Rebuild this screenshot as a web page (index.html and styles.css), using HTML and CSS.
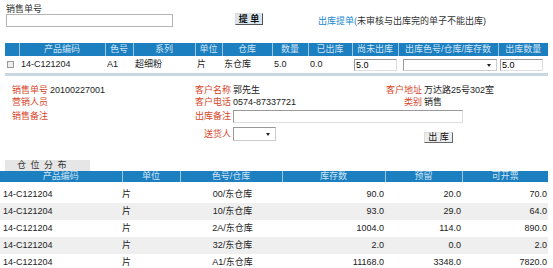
FILE: index.html
```html
<!DOCTYPE html>
<html lang="zh-CN">
<head>
  <meta charset="UTF-8" />
  <title>出库提单</title>
  <link rel="stylesheet" href="styles.css">
</head>
<body>

  <div class="order-bar">
    <div class="order-field">
      <label for="order-no">销售单号</label>
      <input type="text" id="order-no" />
    </div>
    <button class="btn-fetch" type="button">提 单</button>
    <div class="page-title"><span class="blue">出库提单(</span>未审核与出库完的单子不能出库)</div>
  </div>

  <table class="grid out-table">
    <colgroup>
      <col style="width:14px"><col style="width:86px"><col style="width:28px"><col style="width:62px">
      <col style="width:27px"><col style="width:50px"><col style="width:36px"><col style="width:44px">
      <col style="width:46px"><col style="width:100px"><col style="width:50px">
    </colgroup>
    <thead>
      <tr>
        <th></th><th>产品编码</th><th>色号</th><th>系列</th><th>单位</th><th>仓库</th>
        <th>数量</th><th>已出库</th><th>尚未出库</th><th>出库色号/仓库/库存数</th><th>出库数量</th>
      </tr>
    </thead>
    <tbody>
      <tr>
        <td><input type="checkbox" class="chk" /></td>
        <td>14-C121204</td>
        <td>A1</td>
        <td>超细粉</td>
        <td>片</td>
        <td>东仓库</td>
        <td>5.0</td>
        <td>0.0</td>
        <td><input type="text" class="cell-input" value="5.0" /></td>
        <td><div class="select-box wide"><select></select></div></td>
        <td><input type="text" class="cell-input" value="5.0" /></td>
      </tr>
    </tbody>
  </table>

  <div class="order-info">
    <span class="lbl">销售单号</span><span class="val">20100227001</span>
    <span class="lbl right">客户名称</span><span class="val">郭先生</span>
    <span class="lbl right">客户地址</span><span class="val">万达路25号302室</span>

    <span class="lbl">营销人员</span><span class="val"></span>
    <span class="lbl right">客户电话</span><span class="val">0574-87337721</span>
    <span class="lbl right">类别</span><span class="val">销售</span>

    <span class="lbl">销售备注</span><span class="val"></span>
    <span class="lbl right">出库备注</span>
    <span class="val memo-cell"><input type="text" class="memo-input" /></span>

    <span></span><span></span>
    <span class="lbl right">送货人</span>
    <span class="val"><div class="select-box small"><select></select></div></span>
    <span></span>
    <span class="val"><button class="btn-out" type="button">出 库</button></span>
  </div>

  <div class="tab">仓 位 分 布</div>

  <table class="grid stock-table">
    <colgroup>
      <col style="width:122px"><col style="width:58px"><col style="width:102px">
      <col style="width:103px"><col style="width:77px"><col style="width:86px">
    </colgroup>
    <thead>
      <tr><th>产品编码</th><th>单位</th><th>色号/仓库</th><th>库存数</th><th>预留</th><th>可开票</th></tr>
    </thead>
    <tbody>
      <tr><td>14-C121204</td><td class="unit">片</td><td class="c">00/东仓库</td><td class="n">90.0</td><td class="n">20.0</td><td class="n">70.0</td></tr>
      <tr><td>14-C121204</td><td class="unit">片</td><td class="c">10/东仓库</td><td class="n">93.0</td><td class="n">29.0</td><td class="n">64.0</td></tr>
      <tr><td>14-C121204</td><td class="unit">片</td><td class="c">2A/东仓库</td><td class="n">1004.0</td><td class="n">114.0</td><td class="n">890.0</td></tr>
      <tr><td>14-C121204</td><td class="unit">片</td><td class="c">32/东仓库</td><td class="n">2.0</td><td class="n">0.0</td><td class="n">2.0</td></tr>
      <tr><td>14-C121204</td><td class="unit">片</td><td class="c">A1/东仓库</td><td class="n">11168.0</td><td class="n">3348.0</td><td class="n">7820.0</td></tr>
    </tbody>
  </table>

</body>
</html>
```

FILE: styles.css
```css
body {
  margin: 0;
  font-family: 'Liberation Sans', 'Noto Sans CJK SC', sans-serif;
  font-size: 9px;
  color: #222;
  background: #fff;
  overflow: hidden;
}

.order-bar {
  display: flex;
  align-items: flex-end;
  padding: 3px 0 0 6px;
  height: 24px;
}

.order-field label {
  display: block;
  line-height: 10px;
  color: #333;
}

.order-field input {
  display: block;
  box-sizing: border-box;
  width: 167px;
  height: 13px;
  margin: 0;
  border: 1px solid #b5b5b5;
  padding: 0 2px;
  font-size: 9px;
}

.btn-fetch {
  margin: 0 0 2px 62px;
  width: 28px;
  height: 12px;
  padding: 0;
  font-family: inherit;
  font-size: 9px;
  font-weight: bold;
  line-height: 10px;
  color: #111;
  background: #d8e4ee;
  border: 1px solid #555;
  border-top-color: #ddd;
  border-left-color: #ddd;
}

.page-title {
  margin: 0 0 1px 55px;
  font-size: 9px;
  line-height: 10px;
  color: #333;
}

.page-title .blue {
  color: #1888d0;
}

.grid {
  border-collapse: collapse;
  table-layout: fixed;
}

.grid th {
  background: #1c7fc0;
  color: #cfe3f3;
  font-weight: normal;
  text-align: center;
  border-left: 1px solid #9cc8e6;
  padding: 0;
  white-space: nowrap;
  overflow: hidden;
}

.grid th:first-child {
  border-left: none;
}

.grid td {
  padding: 0 0 0 2px;
  white-space: nowrap;
}

.out-table {
  width: 543px;
  margin: 16px 0 0 5px;
  border-bottom: 3px solid #c9d7e2;
}

.out-table th {
  height: 13px;
  line-height: 13px;
}

.out-table td {
  height: 17px;
  line-height: 17px;
}

.chk {
  appearance: none;
  display: block;
  width: 7px;
  height: 7px;
  margin: 0;
  border: 1px solid #999;
  background: #eee;
}

.cell-input {
  display: block;
  box-sizing: border-box;
  width: 43px;
  height: 12px;
  margin: 0;
  padding: 0 1px;
  border: 1px solid #999;
  border-right-color: #ddd;
  border-bottom-color: #ddd;
  font-family: inherit;
  font-size: 9px;
}

.select-box {
  position: relative;
  box-sizing: border-box;
  height: 12px;
  border: 1px solid #999;
  border-right-color: #ccc;
  border-bottom-color: #ccc;
  background: #fff;
}

.select-box select {
  appearance: none;
  width: 100%;
  height: 100%;
  border: none;
  background: transparent;
  display: block;
}

.select-box::after {
  content: "";
  position: absolute;
  right: 5px;
  top: 4px;
  border-left: 2px solid transparent;
  border-right: 2px solid transparent;
  border-top: 3px solid #222;
}

.select-box.wide {
  width: 94px;
  margin-left: 3px;
}

.select-box.small {
  width: 43px;
  height: 14px;
}

.select-box.small::after {
  top: 5px;
}

.order-info {
  display: grid;
  grid-template-columns: 38px 145px 38px 150px 41px 1fr;
  grid-template-rows: 12px 12px 16px 19px;
  padding: 8px 0 0 12px;
  line-height: 12px;
  align-items: center;
}

.lbl {
  color: #d6472b;
  white-space: nowrap;
}

.lbl.right {
  text-align: right;
  padding-right: 2px;
}

.val {
  white-space: nowrap;
}

.memo-cell {
  grid-column: span 3;
}

.memo-input {
  display: block;
  box-sizing: border-box;
  width: 230px;
  height: 13px;
  margin: 0;
  border: 1px solid #999;
  border-right-color: #ddd;
  border-bottom-color: #ddd;
}

.btn-out {
  display: block;
  margin-top: 7px;
  width: 29px;
  height: 11px;
  padding: 0;
  font-family: inherit;
  font-size: 9px;
  line-height: 9px;
  color: #111;
  background: #eee;
  border: 1px solid #666;
  border-top-color: #ddd;
  border-left-color: #ddd;
}

.tab {
  width: 85px;
  height: 11px;
  margin: 17px 0 0 5px;
  padding-left: 12px;
  box-sizing: border-box;
  background: #e6e6e6;
  color: #333;
  line-height: 11px;
  letter-spacing: 1px;
}

.stock-table {
  width: 548px;
  margin: 0;
}

.stock-table th {
  height: 11px;
  line-height: 11px;
}

.stock-table tbody::before {
  content: "";
  display: block;
  height: 4px;
}

.stock-table td {
  height: 17px;
  line-height: 17px;
  padding: 0 0 0 3px;
}

.stock-table tbody tr:nth-child(even) td {
  background: #efefef;
}

.stock-table td.unit {
  padding-left: 0;
}

.stock-table td.c {
  text-align: center;
}

.stock-table td.n {
  text-align: right;
  padding: 0 1px 0 0;
}
```
